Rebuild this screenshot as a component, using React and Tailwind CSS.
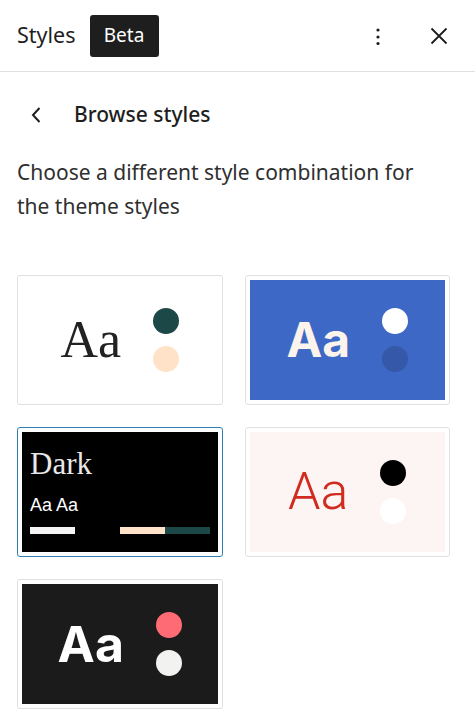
import React from 'react';

const ui = { fontFamily: '"Noto Sans", "Open Sans", sans-serif' };

const Dots = ({ top, bottom }) => (
  <div className="flex flex-col gap-[12px]">
    <div className={`h-[26px] w-[26px] rounded-full ${top}`} />
    <div className={`h-[26px] w-[26px] rounded-full ${bottom}`} />
  </div>
);

const Card = ({ selected, children }) => (
  <button
    className={`h-[130px] rounded-[3px] border p-[4px] text-left ${
      selected ? 'border-[#2f7fb7]' : 'border-[#e0e0e0]'
    }`}
  >
    {children}
  </button>
);

const App = () => {
  return (
    <div className="h-[718px] w-[475px] bg-white text-[#1e1e1e]" style={ui}>
      {/* Header */}
      <div className="flex h-[72px] items-center border-b border-[#e0e0e0] pl-[17px] pr-[24px]">
        <span className="text-[21.5px]">Styles</span>
        <span className="ml-[14px] flex h-[42px] w-[69px] items-center justify-center rounded-[3px] bg-[#1e1e1e] text-[19px] text-white">
          Beta
        </span>
        <div className="flex-1" />
        <svg width="24" height="24" viewBox="0 0 24 24" className="mr-[37px]">
          <circle cx="12" cy="6" r="1.6" fill="#1e1e1e" />
          <circle cx="12" cy="13" r="1.6" fill="#1e1e1e" />
          <circle cx="12" cy="19.5" r="1.6" fill="#1e1e1e" />
        </svg>
        <svg width="24" height="24" viewBox="0 0 24 24">
          <path d="M4.5 4.5l15 15M19.5 4.5l-15 15" stroke="#1e1e1e" strokeWidth="1.8" fill="none" />
        </svg>
      </div>

      {/* Back row */}
      <div className="mt-[27px] flex items-center pl-[25px]">
        <svg width="24" height="24" viewBox="0 0 24 24">
          <path d="M14.5 5l-6.5 7 6.5 7" stroke="#1e1e1e" strokeWidth="2" fill="none" />
        </svg>
        <span className="ml-[25px] text-[21px] font-medium">Browse styles</span>
      </div>

      <p className="mt-[24px] pl-[17px] pr-[40px] text-[21px] leading-[34px] text-[#2f2f2f]">
        Choose a different style combination for the theme styles
      </p>

      {/* Style grid */}
      <div className="mt-[52px] grid grid-cols-2 gap-x-[22px] gap-y-[22px] pl-[17px] pr-[25px]">
        <Card>
          <div className="flex h-full items-center justify-center gap-[32px] bg-white">
            <span className="text-[52px] font-light leading-none text-[#222]" style={{ fontFamily: '"Liberation Serif", serif' }}>
              Aa
            </span>
            <Dots top="bg-[#1d4848]" bottom="bg-[#ffe2c7]" />
          </div>
        </Card>

        <Card>
          <div className="flex h-full items-center justify-center gap-[32px] bg-[#3e68c6]">
            <span className="text-[48px] font-bold leading-none text-[#fbf3ec]" style={{ fontFamily: 'Inter, sans-serif' }}>
              Aa
            </span>
            <Dots top="bg-white" bottom="bg-[#3558a8]" />
          </div>
        </Card>

        <Card selected>
          <div className="flex h-full flex-col bg-black px-[8px] pt-[16px]">
            <span className="text-[31px] leading-none text-[#e8e8e8]" style={{ fontFamily: '"Liberation Serif", serif' }}>
              Dark
            </span>
            <span className="mt-[17px] text-[18px] leading-none text-white" style={{ fontFamily: '"Liberation Sans", sans-serif' }}>
              Aa Aa
            </span>
            <div className="mt-[13px] flex">
              <div className="h-[7px] w-[45px] bg-[#f4f4f4]" />
              <div className="flex-1" />
              <div className="h-[7px] w-[45px] bg-[#ffe2c7]" />
              <div className="h-[7px] w-[45px] bg-[#1d4848]" />
            </div>
          </div>
        </Card>

        <Card>
          <div className="flex h-full items-center justify-center gap-[32px] bg-[#fdf5f4]">
            <span className="text-[52px] font-light leading-none text-[#d12b1f]" style={{ fontFamily: 'Roboto, sans-serif' }}>
              Aa
            </span>
            <Dots top="bg-black" bottom="bg-white" />
          </div>
        </Card>

        <Card>
          <div className="flex h-full items-center justify-center gap-[32px] bg-[#1b1b1b]">
            <span className="text-[50px] font-bold leading-none text-white" style={{ fontFamily: 'Inter, sans-serif' }}>
              Aa
            </span>
            <Dots top="bg-[#ff6b75]" bottom="bg-[#f2f2f0]" />
          </div>
        </Card>
      </div>
    </div>
  );
};

export default App;
